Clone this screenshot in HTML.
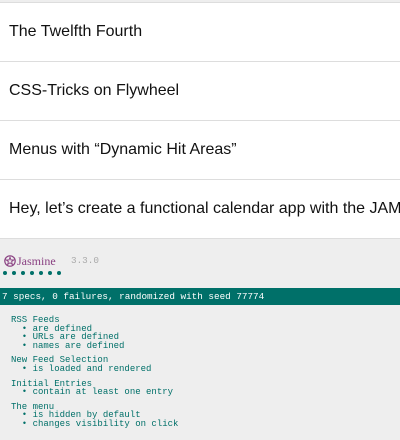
<!DOCTYPE html>
<html><head><meta charset="utf-8"><style>
*{margin:0;padding:0;box-sizing:border-box}
body{width:400px;height:438px;overflow:hidden;background:#eee;font-family:"Liberation Sans",sans-serif}
.list{background:#fff;border-top:1px solid #ddd;margin-top:2px}
.item{height:59px;border-bottom:1px solid #ddd;padding-left:9px;line-height:57px;font-size:16px;color:#111;white-space:nowrap;overflow:hidden}
.jas{font-family:"Liberation Mono",monospace;position:relative;height:200px}
.logo{position:absolute;left:4px;top:15px;height:14px;display:flex;align-items:center;color:#8a4182;font-family:"Liberation Serif",serif;font-size:12px}
.logo svg{margin-right:1px}
.ver{position:absolute;left:71px;top:16px;color:#aaa;font-size:9.3px}
.dots{position:absolute;left:3px;top:32px;display:flex;gap:5px}
.dots i{width:4px;height:4px;border-radius:50%;background:#007069}
.bar{position:absolute;left:0;top:49px;width:400px;height:17px;background:#007069;color:#fff;font-size:9.3px;line-height:17px;padding-left:2px;white-space:nowrap}
.specs{position:absolute;left:11px;top:77px;color:#007069;font-size:9px;line-height:8.6px;white-space:pre}
.g{margin-bottom:6px}
</style></head><body>
<div class="list">
<div class="item">The Twelfth Fourth</div>
<div class="item">CSS-Tricks on Flywheel</div>
<div class="item">Menus with “Dynamic Hit Areas”</div>
<div class="item">Hey, let’s create a functional calendar app with the JAMstack</div>
</div>
<div class="jas">
<div class="logo"><svg width="12" height="12" viewBox="0 0 12 12"><circle cx="6" cy="6" r="5.2" fill="none" stroke="#8a4182" stroke-width="1.2"/><path d="M6 2.2L7 5 9.8 5 7.6 6.7 8.4 9.5 6 7.8 3.6 9.5 4.4 6.7 2.2 5 5 5Z" fill="none" stroke="#8a4182" stroke-width="0.9"/></svg>Jasmine</div>
<div class="ver">3.3.0</div>
<div class="dots"><i></i><i></i><i></i><i></i><i></i><i></i><i></i></div>
<div class="bar">7 specs, 0 failures, randomized with seed 77774</div>
<div class="specs"><div class="g">RSS Feeds
  • are defined
  • URLs are defined
  • names are defined</div><div class="g">New Feed Selection
  • is loaded and rendered</div><div class="g">Initial Entries
  • contain at least one entry</div><div>The menu
  • is hidden by default
  • changes visibility on click</div></div>
</div>
</body></html>
